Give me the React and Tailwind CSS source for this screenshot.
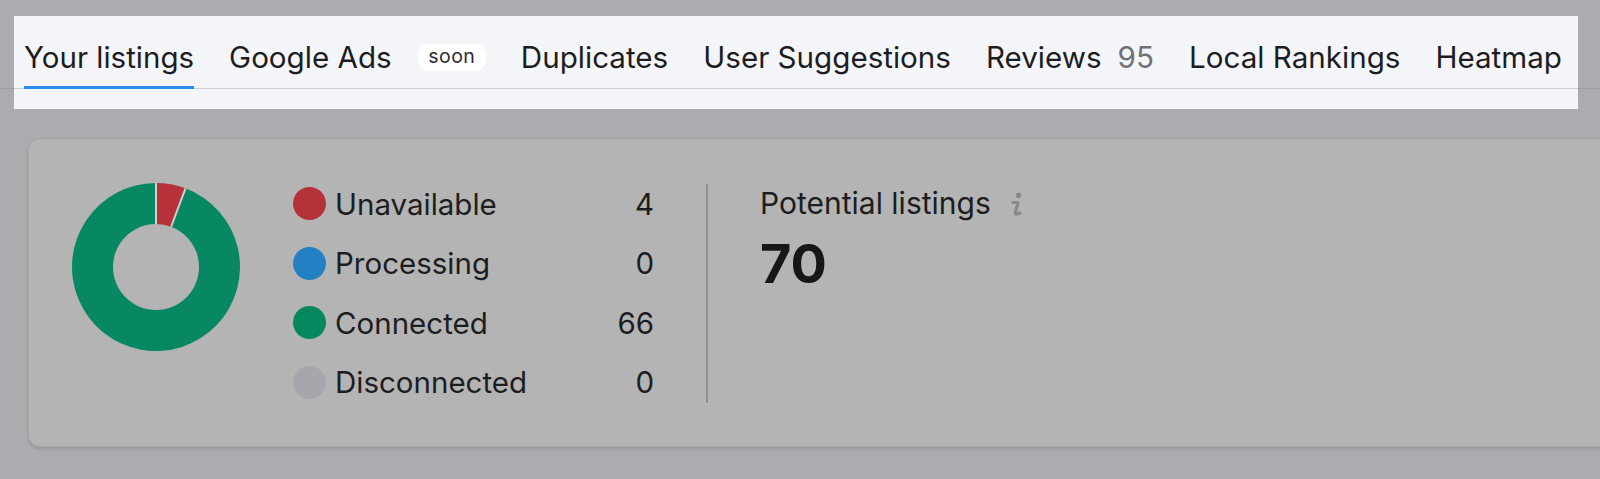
const tabs = [
  { label: "Your listings", active: true },
  { label: "Google Ads", badge: "soon" },
  { label: "Duplicates" },
  { label: "User Suggestions" },
  { label: "Reviews", count: "95" },
  { label: "Local Rankings" },
  { label: "Heatmap" },
];

const legend = [
  { label: "Unavailable", value: 4, dot: "bg-[#b5323a]" },
  { label: "Processing", value: 0, dot: "bg-[#2380c2]" },
  { label: "Connected", value: 66, dot: "bg-[#05875f]" },
  { label: "Disconnected", value: 0, dot: "bg-[#a6a7ac]" },
];

const Donut = () => (
  <svg width="168" height="168" viewBox="0 0 168 168" className="shrink-0">
    <path
      d="M113.51 5.35 A84 84 0 1 1 84 0 L84 41 A43 43 0 1 0 99.11 43.74 Z"
      fill="#078762"
    />
    <path
      d="M84 0 A84 84 0 0 1 113.51 5.35 L99.11 43.74 A43 43 0 0 0 84 41 Z"
      fill="#b7313a"
    />
    <line x1="84" y1="0" x2="84" y2="41" stroke="#cfcfcf" strokeWidth="2" />
    <line x1="113.51" y1="5.35" x2="99.11" y2="43.74" stroke="#cfcfcf" strokeWidth="2" />
  </svg>
);

const InfoIcon = () => (
  <svg width="16" height="26" viewBox="0 0 16 26" className="ml-[18px] mt-[2px]">
    <circle cx="9.5" cy="3.5" r="2.7" fill="#88888a" />
    <path
      d="M4 10.5 H9 L6.5 20 Q6 22.5 8.5 22 L11 21.2"
      fill="none"
      stroke="#88888a"
      strokeWidth="3.2"
      strokeLinecap="round"
      strokeLinejoin="round"
    />
  </svg>
);

export default function App() {
  return (
    <div className="min-h-screen bg-[#abacb0] pt-4 overflow-hidden font-[Inter,sans-serif] text-[#1c1d21]">
      {/* tab strip, highlighted */}
      <div className="flex">
        <div className="w-[14px] h-[73px] border-b border-[#9c9da1]" />
        <div className="w-[1564px] bg-[#f4f5f9] pb-[20px]">
          <div className="flex gap-[35px] pl-[10px] h-[73px] border-b border-[#cbccd1]">
            {tabs.map((t) => (
              <div
                key={t.label}
                className={
                  t.active
                    ? "h-[73px] pt-3 flex items-center border-b-[3px] border-[#2a8cec] text-[29.5px]"
                    : "h-[73px] pt-3 flex items-center border-b-[3px] border-transparent text-[29.6px]"
                }
              >
                <span>{t.label}</span>
                {t.badge && (
                  <span className="ml-[26px] bg-white rounded-[11px] px-[10.5px] h-[27px] flex items-center text-[19.5px] tracking-wide text-[#2a2b2f]">
                    {t.badge}
                  </span>
                )}
                {t.count && (
                  <span className="ml-[16px] text-[#707176]">{t.count}</span>
                )}
              </div>
            ))}
          </div>
        </div>
        <div className="flex-1 h-[73px] border-b border-[#9c9da1]" />
      </div>

      {/* summary card */}
      <div className="pl-[28px] pt-[29px]">
        <div className="w-[1620px] h-[309px] bg-[#b4b4b4] rounded-[12px] border border-[#a6a6a6] shadow-[0_2px_3px_rgba(0,0,0,0.12)] flex items-start pt-[35px] pl-[43px]">
          <div className="mt-[9px]">
            <Donut />
          </div>

          <div className="ml-[53px] w-[361px] flex flex-col">
            {legend.map((row) => (
              <div key={row.label} className="h-[59.5px] flex items-center text-[29.5px]">
                <span className={`w-[33px] h-[33px] rounded-full ${row.dot}`} />
                <span className="ml-[9px]">{row.label}</span>
                <span className="ml-auto">{row.value}</span>
              </div>
            ))}
          </div>

          <div className="ml-[52px] mt-[10px] w-[2px] h-[219px] bg-[#8f8f91]" />

          <div className="ml-[52px] flex flex-col">
            <div className="flex items-center h-[59.5px] text-[30px]">
              <span>Potential listings</span>
              <InfoIcon />
            </div>
            <div className="text-[54px] font-bold leading-none mt-[3px] text-[#161719]">70</div>
          </div>
        </div>
      </div>
    </div>
  );
}
